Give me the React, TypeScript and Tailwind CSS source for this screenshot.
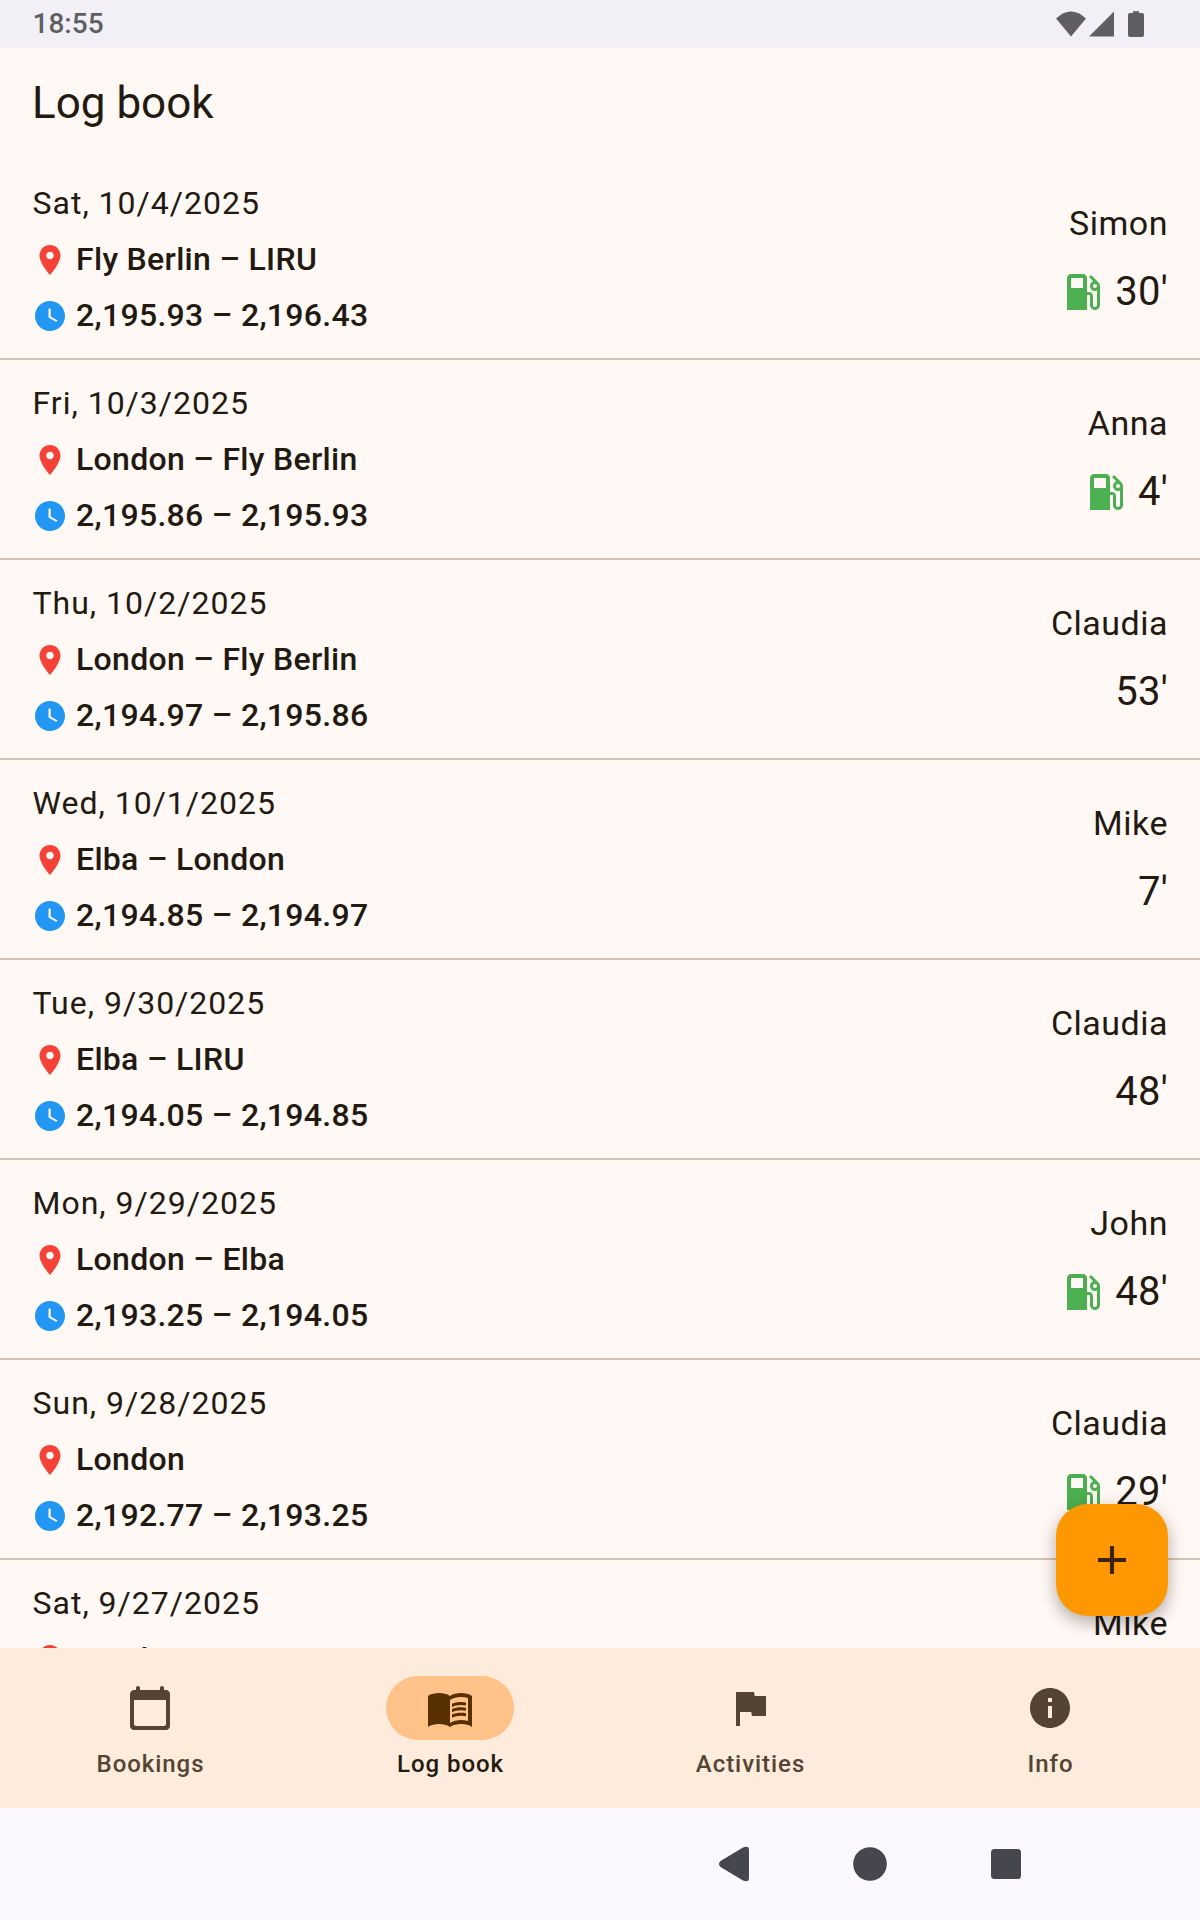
import React from "react";

type Entry = { date: string; route: string; time: string; pilot: string; minutes: string; fuel?: boolean };

const entries: Entry[] = [
  { date: "Sat, 10/4/2025", route: "Fly Berlin – LIRU", time: "2,195.93 – 2,196.43", pilot: "Simon", minutes: "30'", fuel: true },
  { date: "Fri, 10/3/2025", route: "London – Fly Berlin", time: "2,195.86 – 2,195.93", pilot: "Anna", minutes: "4'", fuel: true },
  { date: "Thu, 10/2/2025", route: "London – Fly Berlin", time: "2,194.97 – 2,195.86", pilot: "Claudia", minutes: "53'" },
  { date: "Wed, 10/1/2025", route: "Elba – London", time: "2,194.85 – 2,194.97", pilot: "Mike", minutes: "7'" },
  { date: "Tue, 9/30/2025", route: "Elba – LIRU", time: "2,194.05 – 2,194.85", pilot: "Claudia", minutes: "48'" },
  { date: "Mon, 9/29/2025", route: "London – Elba", time: "2,193.25 – 2,194.05", pilot: "John", minutes: "48'", fuel: true },
  { date: "Sun, 9/28/2025", route: "London", time: "2,192.77 – 2,193.25", pilot: "Claudia", minutes: "29'", fuel: true },
  { date: "Sat, 9/27/2025", route: "London", time: "2,192.65 – 2,192.77", pilot: "Mike", minutes: "7'" },
];

const icons = {
  pin: "M12 2C8.13 2 5 5.13 5 9c0 5.25 7 13 7 13s7-7.75 7-13c0-3.87-3.13-7-7-7zm0 9.5c-1.38 0-2.5-1.12-2.5-2.5s1.12-2.5 2.5-2.5 2.5 1.12 2.5 2.5-1.12 2.5-2.5 2.5z",
  clock: "M11.99 2C6.47 2 2 6.48 2 12s4.47 10 9.99 10C17.52 22 22 17.52 22 12S17.52 2 11.99 2zm4.24 14L11 13V7h1.5v5.25l4.5 2.67z",
  fuel: "M19.77 7.23l.01-.01-3.72-3.72L15 4.56l2.11 2.11c-.94.36-1.61 1.26-1.61 2.33 0 1.38 1.12 2.5 2.5 2.5.36 0 .69-.08 1-.21v7.21c0 .55-.45 1-1 1s-1-.45-1-1V14c0-1.1-.9-2-2-2h-1V5c0-1.1-.9-2-2-2H6c-1.1 0-2 .9-2 2v16h10v-7.5h1.5v5c0 1.38 1.12 2.5 2.5 2.5s2.5-1.12 2.5-2.5V9c0-.69-.28-1.32-.73-1.77zM12 10H6V5h6v5zm6 0c-.55 0-1-.45-1-1s.45-1 1-1 1 .45 1 1-.45 1-1 1z",
  calendar: "M20 3h-1V2c0-.55-.45-1-1-1s-1 .45-1 1v1H7V2c0-.55-.45-1-1-1s-1 .45-1 1v1H4c-1.1 0-2 .9-2 2v16c0 1.1.9 2 2 2h16c1.1 0 2-.9 2-2V5c0-1.1-.9-2-2-2zm-1 18H5c-.55 0-1-.45-1-1V8h16v12c0 .55-.45 1-1 1z",
  book: "M17.5 4.5c-1.95 0-4.05.4-5.5 1.5-1.45-1.1-3.55-1.5-5.5-1.5S2.45 4.9 1 6v15.5C2.45 20.4 4.55 20 6.5 20s4.05.4 5.5 1.5c1.45-1.1 3.55-1.5 5.5-1.5 1.17 0 2.39.15 3.5.5.75.25 1.4.55 2 1V6c-1.45-1.1-3.55-1.5-5.5-1.5zM21 18.5c-1.1-.35-2.3-.5-3.5-.5-1.7 0-4.15.65-5.5 1.5V8c1.35-.85 3.8-1.5 5.5-1.5 1.2 0 2.4.15 3.5.5v11.5zM17.5 10.5c.88 0 1.73.09 2.5.26V9.24c-.79-.15-1.64-.24-2.5-.24-1.7 0-3.24.29-4.5.83v1.66c1.13-.64 2.7-.99 4.5-.99zM13 12.49v1.66c1.13-.64 2.7-.99 4.5-.99.88 0 1.73.09 2.5.26V11.9c-.79-.15-1.64-.24-2.5-.24-1.7 0-3.24.3-4.5.83zM17.5 14.33c-1.7 0-3.24.29-4.5.83v1.66c1.13-.64 2.7-.99 4.5-.99.88 0 1.73.09 2.5.26v-1.52c-.79-.16-1.64-.24-2.5-.24z",
  flag: "M14.4 6L14 4H5v17h2v-7h5.6l.4 2h7V6z",
  info: "M12 2C6.48 2 2 6.48 2 12s4.48 10 10 10 10-4.48 10-10S17.52 2 12 2zm1 15h-2v-6h2v6zm0-8h-2V7h2v2z",
  plus: "M19 13h-6v6h-2v-6H5v-2h6V5h2v6h6v2z",
};

function Icon({ name, className }: { name: keyof typeof icons; className: string }) {
  return (
    <svg viewBox="0 0 24 24" className={`shrink-0 fill-current ${className}`}>
      <path d={icons[name]} />
    </svg>
  );
}

function LogRow({ entry }: { entry: Entry }) {
  return (
    <li className="flex h-[200px] shrink-0 justify-between border-b-2 border-[#d8c2ae] px-8">
      <div className="flex flex-col pt-4">
        <div className="h-14 pl-[0.5px] text-[32px] leading-[54px] tracking-[1px]">{entry.date}</div>
        <div className="flex h-14 items-center gap-2 text-[32px] font-medium tracking-[0.3px]">
          <Icon name="pin" className="size-9 text-[#f44336]" />
          <span className="pb-0.5">{entry.route}</span>
        </div>
        <div className="flex h-14 items-center gap-2 text-[32px] font-medium tracking-[0.3px]">
          <Icon name="clock" className="size-9 text-[#2196f3]" />
          <span className="pb-0.5">{entry.time}</span>
        </div>
      </div>
      <div className="flex flex-col items-end pt-8">
        <div className="h-[68px] pt-1 text-[34px] leading-[54px] tracking-[0.5px]">{entry.pilot}</div>
        <div className="flex h-16 items-center gap-2 text-[40px] tracking-[0.3px]">
          {entry.fuel && <Icon name="fuel" className="size-12 text-[#4caf50]" />}
          <span>{entry.minutes}</span>
        </div>
      </div>
    </li>
  );
}

const tabs: { label: string; icon: keyof typeof icons; active?: boolean }[] = [
  { label: "Bookings", icon: "calendar" },
  { label: "Log book", icon: "book", active: true },
  { label: "Activities", icon: "flag" },
  { label: "Info", icon: "info" },
];

export default function App() {
  return (
    <div className="flex h-[1920px] w-[1200px] flex-col overflow-hidden bg-[#fff8f5] font-['Roboto',sans-serif] text-[#221a11]">
      <div className="flex h-12 shrink-0 items-center justify-between bg-[#f2eff7] pl-8 text-[#5f5f62]">
        <span className="pl-[0.5px] text-[28px] font-medium leading-none">18:55</span>
        <svg viewBox="0 0 144 48" className="h-12 w-36 fill-current">
          <path d="M0 18.500Q15 4.500 30 18.500L15 36.500Z" />
          <path d="M33 36.500L58 11.500V36.500Z" />
          <path d="M77 11.200H83V13H86Q88 13 88 15V35Q88 37 86 37H74Q72 37 72 35V15Q72 13 74 13H77Z" />
        </svg>
      </div>
      <header className="flex h-28 shrink-0 items-center px-8 pb-0.5">
        <h1 className="text-[44px] leading-none">Log book</h1>
      </header>
      <main className="relative min-h-0 flex-1">
        <ul className="flex h-full flex-col overflow-hidden">
          {entries.map((e) => (
            <LogRow key={e.date} entry={e} />
          ))}
        </ul>
        <button className="absolute right-8 bottom-8 flex size-28 items-center justify-center rounded-[32px] bg-[#ff9800] text-[#3b2105] shadow-[0_8px_16px_rgba(0,0,0,0.22),0_2px_20px_rgba(0,0,0,0.1)]">
          <Icon name="plus" className="size-[56px] p-1" />
        </button>
      </main>
      <nav className="grid h-40 shrink-0 grid-cols-4 bg-[#fdebdb]">
        {tabs.map((t) => (
          <div key={t.label} className={`flex flex-col items-center pt-7 ${t.active ? "text-[#221a11]" : "text-[#544434]"}`}>
            <div className={`flex h-16 w-32 items-center justify-center rounded-full ${t.active ? "bg-[#ffc288] text-[#572f00]" : ""}`}>
              <Icon name={t.icon} className="size-12" />
            </div>
            <span className="mt-2 pl-px text-[24px] font-medium leading-8 tracking-[0.95px]">{t.label}</span>
          </div>
        ))}
      </nav>
      <div className="flex h-28 shrink-0 items-center justify-end bg-[#fbf8ff]">
        <svg viewBox="0 0 360 112" className="mr-[150px] h-28 w-[360px] fill-[#46464f]">
          <path d="M30.500 53L53 39.500Q59 37 59 42V70Q59 75 53 72.500L30.500 59Q27.500 56 30.500 53Z" />
          <circle cx="180" cy="56" r="16.800" />
          <rect x="301" y="41" width="30" height="30" rx="3.500" />
        </svg>
      </div>
    </div>
  );
}
